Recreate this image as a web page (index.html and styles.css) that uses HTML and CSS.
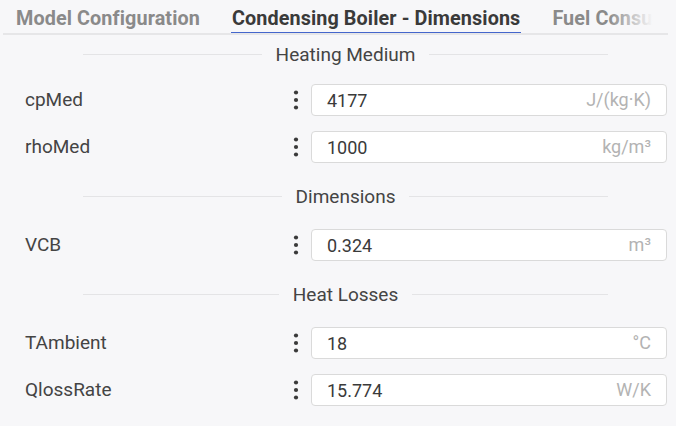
FILE: index.html
```html
<!DOCTYPE html>
<html>
<head>
<meta charset="utf-8">
<link rel="stylesheet" href="styles.css">
</head>
<body>
<div class="tabs">
  <div class="tab">Model Configuration</div>
  <div class="tab active">Condensing Boiler - Dimensions</div>
  <div class="tab">Fuel Consumption</div>
</div>
<div class="panel">
  <div class="section first">
    <div class="heading">Heating Medium</div>
    <div class="row">
      <div class="label">cpMed</div>
      <div class="kebab"><svg width="8" height="20" viewBox="0 0 8 20"><circle cx="4" cy="2.5" r="2.1"/><circle cx="4" cy="10" r="2.1"/><circle cx="4" cy="17.5" r="2.1"/></svg></div>
      <div class="field"><span class="value">4177</span><span class="unit">J/(kg·K)</span></div>
    </div>
    <div class="row">
      <div class="label">rhoMed</div>
      <div class="kebab"><svg width="8" height="20" viewBox="0 0 8 20"><circle cx="4" cy="2.5" r="2.1"/><circle cx="4" cy="10" r="2.1"/><circle cx="4" cy="17.5" r="2.1"/></svg></div>
      <div class="field"><span class="value">1000</span><span class="unit">kg/m³</span></div>
    </div>
  </div>
  <div class="section">
    <div class="heading">Dimensions</div>
    <div class="row">
      <div class="label">VCB</div>
      <div class="kebab"><svg width="8" height="20" viewBox="0 0 8 20"><circle cx="4" cy="2.5" r="2.1"/><circle cx="4" cy="10" r="2.1"/><circle cx="4" cy="17.5" r="2.1"/></svg></div>
      <div class="field"><span class="value">0.324</span><span class="unit">m³</span></div>
    </div>
  </div>
  <div class="section">
    <div class="heading">Heat Losses</div>
    <div class="row">
      <div class="label">TAmbient</div>
      <div class="kebab"><svg width="8" height="20" viewBox="0 0 8 20"><circle cx="4" cy="2.5" r="2.1"/><circle cx="4" cy="10" r="2.1"/><circle cx="4" cy="17.5" r="2.1"/></svg></div>
      <div class="field"><span class="value">18</span><span class="unit">°C</span></div>
    </div>
    <div class="row">
      <div class="label">QlossRate</div>
      <div class="kebab"><svg width="8" height="20" viewBox="0 0 8 20"><circle cx="4" cy="2.5" r="2.1"/><circle cx="4" cy="10" r="2.1"/><circle cx="4" cy="17.5" r="2.1"/></svg></div>
      <div class="field"><span class="value">15.774</span><span class="unit">W/K</span></div>
    </div>
  </div>
</div>
</body>
</html>
```
FILE: styles.css
```css
html, body {
  margin: 0;
  padding: 0;
  background: #f7f7f9;
  font-family: Roboto, "Noto Sans", sans-serif;
  color: #444;
  overflow: hidden;
}
.tabs {
  position: relative;
  display: flex;
  gap: 32px;
  margin: 0 8px 0 3px;
  padding-left: 13px;
  height: 33px;
  border-bottom: 2px solid #e6e6e8;
  overflow: hidden;
  white-space: nowrap;
}
.tabs::after {
  content: "";
  position: absolute;
  top: 0;
  right: 0;
  width: 60px;
  height: 33px;
  background: linear-gradient(to right, rgba(247,247,249,0), #f7f7f9 75%);
}
.tab {
  position: relative;
  font-weight: 700;
  font-size: 19.8px;
  line-height: 33px;
  padding-top: 2px;
  height: 31px;
  color: #8a8a8a;
  letter-spacing: 0.1px;
}
.tab.active {
  color: #3a3a3a;
}
.tab.active::after {
  content: "";
  position: absolute;
  left: -1px;
  right: -1px;
  bottom: -2px;
  height: 3px;
  background: #4466cc;
}
.panel {
  padding-top: 7px;
}
.section {
  margin-top: 14px;
}
.section.first {
  margin-top: 0;
}
.heading {
  display: flex;
  align-items: center;
  gap: 14px;
  margin: 0 68px 13px 83px;
  height: 24px;
  font-size: 19px;
  color: #444;
}
.heading::before, .heading::after {
  content: "";
  flex: 1;
  height: 1px;
  background: #e4e4e6;
}
.section.first .heading {
  margin-bottom: 10px;
}
.row {
  display: grid;
  grid-template-columns: 256px 8px 1fr;
  column-gap: 11px;
  align-items: center;
  height: 47px;
  padding: 0 9px 0 25px;
}
.label {
  font-size: 19px;
  color: #444;
}
.kebab {
  display: flex;
  align-items: center;
  height: 20px;
}
.kebab svg {
  fill: #3a3a3a;
  display: block;
}
.field {
  display: flex;
  justify-content: space-between;
  align-items: center;
  height: 30px;
  border: 1px solid #dadada;
  border-radius: 4px;
  background: #fff;
  padding: 0 15px;
  font-size: 18px;
}
.value {
  color: #3a3a3a;
  padding-top: 2px;
}
.unit {
  color: #b3b3b3;
}
```
